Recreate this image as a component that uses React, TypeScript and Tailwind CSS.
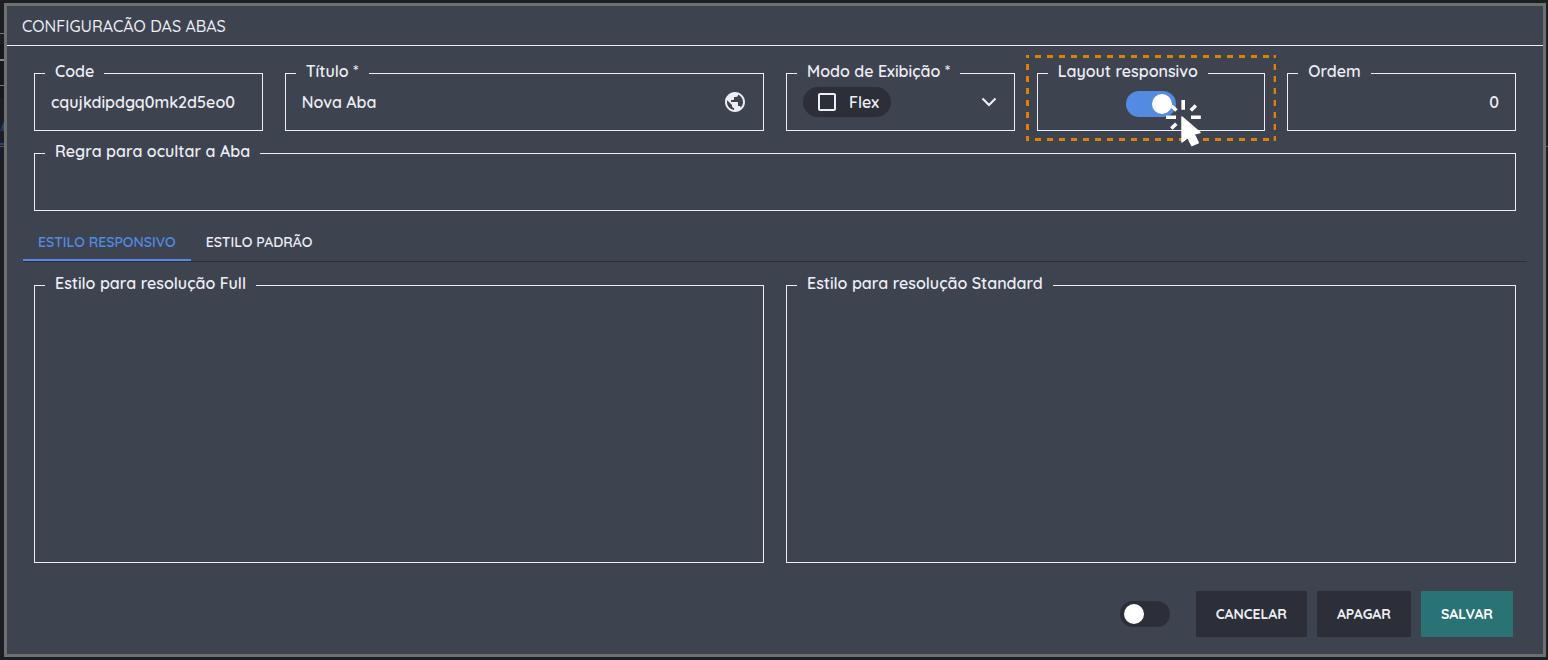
import { useState, type ReactNode } from "react";
import { MdPublic, MdCheckBoxOutlineBlank } from "react-icons/md";

type FieldProps = { label: string; htmlFor: string; className?: string; children: ReactNode };

function Field({ label, htmlFor, className = "h-[58px]", children }: FieldProps) {
  return (
    <div className={`relative border border-[#eceef3] font-semibold ${className}`}>
      <label htmlFor={htmlFor} className="absolute -top-[13px] left-2.5 bg-[#3e4350] px-2.5 leading-5 whitespace-nowrap">
        {label}
      </label>
      {children}
    </div>
  );
}

function Toggle({ id, label, initial }: { id: string; label?: string; initial: boolean }) {
  const [on, setOn] = useState(initial);
  return (
    <span className="relative inline-flex h-[26px] w-[50px] shrink-0">
      <input
        id={id}
        type="checkbox"
        role="switch"
        aria-label={label}
        checked={on}
        onChange={() => setOn(!on)}
        className="peer h-full w-full cursor-pointer appearance-none rounded-full bg-[#2c2e38] checked:bg-[#538be2]"
      />
      <span className="pointer-events-none absolute top-[3px] left-1 size-5 rounded-full bg-white peer-checked:left-[26px]" />
    </span>
  );
}

function Highlight() {
  return (
    <svg
      className="pointer-events-none absolute -top-[19px] -left-3 h-[86px] w-[calc(100%+24px)]"
      stroke="#e08200"
      strokeWidth="3"
      strokeDasharray="6 6"
      aria-hidden="true"
    >
      <line x1="0" y1="1.5" x2="100%" y2="1.5" strokeDashoffset="3" />
      <line x1="0" y1="84.5" x2="100%" y2="84.5" strokeDashoffset="3" />
      <line x1="1.5" y1="0" x2="1.5" y2="86" strokeDashoffset="3" />
      <svg x="100%" overflow="visible">
        <line x1="-1.5" y1="0" x2="-1.5" y2="86" strokeDashoffset="3" />
      </svg>
    </svg>
  );
}

function ClickCursor() {
  return (
    <svg className="pointer-events-none absolute top-[26px] left-32 h-[47px] w-9" viewBox="0 0 36 47" aria-hidden="true">
      <path d="M17.200 0v9.800M0 17.200h10M25 17.200h9.800M5.500 6L10.500 10.500M29.800 5.500L24.800 10.500M5.300 28.500L10.300 23.800" stroke="#fff" strokeWidth="3.600" />
      <path
        d="M16 17L34 32.500L28 34L32.200 42.700L25.700 45.500L21.800 37.500L16 42Z"
        fill="#fff"
        stroke="#fff"
        strokeWidth="1.500"
        strokeLinejoin="round"
      />
    </svg>
  );
}

function Backdrop() {
  return (
    <svg className="pointer-events-none absolute inset-0 h-full w-full" aria-hidden="true">
      <rect y="44" width="4" height="54" fill="#17181b" />
      <rect y="33" width="4" height="1" fill="#75767a" />
      <rect y="59" width="4" height="2" fill="#85868a" />
      <rect y="85" width="4" height="1" fill="#75767a" />
      <path d="M0 131L4 121V131H2.500V127L1 131Z" fill="#2b4473" />
      <rect y="143" width="4" height="2" fill="#2b4473" />
      <rect y="146" width="100%" height="1" fill="#55575e" />
    </svg>
  );
}

const inputClass = "h-full w-full bg-transparent px-4 outline-none";
const actionClass = "h-[46px] px-5 text-sm font-bold";

export default function App() {
  const [tab, setTab] = useState(0);
  return (
    <div className="relative min-h-screen bg-[#1c1e26] pt-[3px] pr-0.5 pb-[3px] pl-1 font-['Quicksand','Lato',sans-serif] text-base font-medium text-[#eceef3]">
      <Backdrop />
      <main className="relative flex min-h-[654px] flex-col border-3 border-[#6f6f6d] bg-[#3e4350]">
        <header className="border-b border-[#eceef3] px-[15px] pt-[9px] pb-[7px]">
          <h1 className="leading-[23px]">CONFIGURACÃO DAS ABAS</h1>
        </header>

        <div className="grid grid-cols-6 gap-[22px] px-[27px] pt-[27px]">
          <Field label="Code" htmlFor="code">
            <input id="code" className={inputClass} defaultValue="cqujkdipdgq0mk2d5eo0" />
          </Field>
          <Field label="Título *" htmlFor="titulo" className="col-span-2 flex h-[58px] items-center">
            <input id="titulo" className={inputClass} defaultValue="Nova Aba" />
            <button aria-label="Traduzir" className="mr-4 shrink-0">
              <MdPublic className="size-6" />
            </button>
          </Field>
          <Field label="Modo de Exibição *" htmlFor="modo">
            <div className="relative flex h-full items-center px-4">
              <span className="pointer-events-none flex h-[30px] w-[88px] items-center gap-2.5 rounded-full bg-[#2c2e38] pl-3">
                <MdCheckBoxOutlineBlank className="size-6 shrink-0" />
                Flex
              </span>
              <svg className="pointer-events-none ml-auto h-[18px] w-[18px]" viewBox="0 0 18 18" fill="none" stroke="currentColor" strokeWidth="2.200" aria-hidden="true">
                <path d="M2.500 5.500L9 12L15.500 5.500" />
              </svg>
              <select id="modo" className="absolute inset-0 h-full w-full cursor-pointer appearance-none opacity-0">
                <option>Flex</option>
              </select>
            </div>
          </Field>
          <Field label="Layout responsivo" htmlFor="responsivo">
            <div className="flex h-full items-center justify-center pt-1">
              <Toggle id="responsivo" initial />
            </div>
            <Highlight />
            <ClickCursor />
          </Field>
          <Field label="Ordem" htmlFor="ordem">
            <input id="ordem" className={`${inputClass} text-right`} defaultValue="0" />
          </Field>
          <Field label="Regra para ocultar a Aba" htmlFor="regra" className="col-span-6 h-[58px]">
            <input id="regra" className={inputClass} />
          </Field>
        </div>

        <div role="tablist" className="mx-4 mt-3 flex border-b border-[#2c2e38] text-sm font-semibold">
          {["ESTILO RESPONSIVO", "ESTILO PADRÃO"].map((name, i) => (
            <button
              key={name}
              role="tab"
              aria-selected={tab === i}
              onClick={() => setTab(i)}
              className={`h-[38px] border-b-2 px-[15px] pt-0.5 ${tab === i ? "border-[#538be2] text-[#538be2]" : "border-transparent"}`}
            >
              {name}
            </button>
          ))}
        </div>

        <div className="grid grow grid-cols-2 gap-[22px] px-[27px] pt-[23px]">
          <Field label="Estilo para resolução Full" htmlFor="full" className="min-h-[278px]">
            <textarea id="full" className="block h-full w-full resize-none bg-transparent p-4 outline-none" />
          </Field>
          <Field label="Estilo para resolução Standard" htmlFor="standard" className="min-h-[278px]">
            <textarea id="standard" className="block h-full w-full resize-none bg-transparent p-4 outline-none" />
          </Field>
        </div>

        <footer className="flex items-center justify-end gap-2.5 px-[30px] pt-7 pb-[17px]">
          <span className="mr-4 flex">
            <Toggle id="ativo" label="Ativo" initial={false} />
          </span>
          <button className={`${actionClass} bg-[#2c2e38]`}>CANCELAR</button>
          <button className={`${actionClass} bg-[#2c2e38]`}>APAGAR</button>
          <button className={`${actionClass} bg-[#2a7374] text-white`}>SALVAR</button>
        </footer>
      </main>
    </div>
  );
}
